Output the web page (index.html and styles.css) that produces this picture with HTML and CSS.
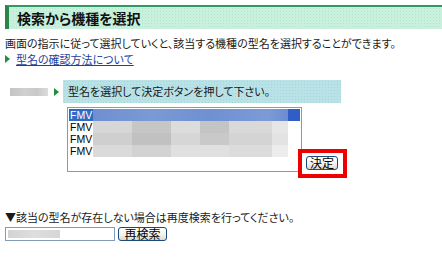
FILE: index.html
```html
<!DOCTYPE html>
<html lang="ja">
<head>
<meta charset="utf-8">
<title>検索から機種を選択</title>
<link rel="stylesheet" href="styles.css">
</head>
<body>
<div class="page">
  <h1 class="title">検索から機種を選択</h1>
  <p class="intro">画面の指示に従って選択していくと、該当する機種の型名を選択することができます。</p>
  <p class="help"><span class="tri"></span><a href="#">型名の確認方法について</a></p>

  <div class="step">
    <span class="blur-label"></span>
    <span class="tri"></span>
    <div class="step-box">型名を選択して決定ボタンを押して下さい。</div>
  </div>

  <div class="select-row">
    <div class="listbox">
      <div class="opt selected"><span class="name">FMV</span><span class="blur blur-sel"></span><span class="blur-end"></span></div>
      <div class="opt"><span class="name">FMV</span><span class="blur blur-a"></span></div>
      <div class="opt"><span class="name">FMV</span><span class="blur blur-b"></span></div>
      <div class="opt"><span class="name">FMV</span><span class="blur blur-c"></span></div>
    </div>
    <span class="mark"><button class="btn btn-decide" type="button">決定</button></span>
  </div>

  <p class="notfound">▼該当の型名が存在しない場合は再度検索を行ってください。</p>
  <div class="research">
    <span class="input"><span class="input-blur"></span></span>
    <button class="btn btn-search" type="button">再検索</button>
  </div>
</div>
</body>
</html>
```

FILE: styles.css
```css
* { box-sizing: border-box; }
html, body { margin: 0; padding: 0; background: #fff; }
body {
  font-family: "Noto Sans CJK JP", "Liberation Sans", sans-serif;
  font-size: 11px;
  color: #1a1a1a;
  font-feature-settings: "palt";
}
.page { width: 442px; height: 261px; overflow: hidden; }

.title {
  margin: 5px 0 0 5px;
  height: 24px;
  border-top: 2px solid #2f9a62;
  border-left: 4px solid #2a8548;
  background-color: #c8f0dc;
  background-image: radial-gradient(#b2e6cc 35%, transparent 40%);
  background-size: 3px 3px;
  padding-left: 8px;
  font-size: 14px;
  font-weight: bold;
  line-height: 22px;
  color: #111;
}

.intro {
  margin: 7px 0 0 5px;
  line-height: 14px;
  white-space: nowrap;
}
.help {
  margin: 2px 0 0 5px;
  line-height: 14px;
  display: flex;
  align-items: center;
  gap: 6px;
}
.help a { color: #1d3f9e; text-decoration: underline; }

.tri {
  width: 0; height: 0;
  border-top: 4px solid transparent;
  border-bottom: 4px solid transparent;
  border-left: 5px solid #1f8f3a;
  flex: none;
}

.step {
  margin: 14px 0 0 10px;
  display: flex;
  align-items: center;
}
.blur-label {
  width: 38px; height: 8px;
  background: linear-gradient(90deg, #c4c4c4, #d0d0d0 40%, #c8c8c8 70%, #dcdcdc);
  margin-right: 6px;
}
.step .tri { margin-right: 4px; }
.step-box {
  width: 278px;
  height: 23px;
  background-color: #b8e2e6;
  background-image: radial-gradient(#a6d6dc 35%, transparent 40%);
  background-size: 3px 3px;
  padding-left: 5px;
  line-height: 23px;
  white-space: nowrap;
}

.select-row {
  margin: 4px 0 0 67px;
  display: flex;
  align-items: flex-start;
}
.listbox {
  width: 235px;
  height: 65px;
  border: 1px solid #7f9db9;
  padding: 1px;
  background: #fff;
  font-family: "Liberation Sans", Arial, sans-serif;
  font-size: 10.5px;
}
.opt {
  height: 12px;
  line-height: 12px;
  display: flex;
  align-items: stretch;
}
.opt .name { width: 24px; padding-left: 1px; color: #000; flex: none; white-space: nowrap; }
.opt.selected { background: #316ac5; }
.opt.selected .name { color: #fff; }
.blur { width: 195px; }
.blur-sel { background: linear-gradient(90deg, #6f8fd0, #7a9ad4 30%, #6f90d2 60%, #7c9bd6 90%, #6c8cd0); }
.blur-end { width: 12px; background: #2f5ec7; }
.blur-a { background: linear-gradient(90deg, #d7d7d7 0 20%, #c6c6c6 20% 40%, #dcdcdc 40% 55%, #c4c4c4 55% 70%, #d9d9d9 70% 92%, #e6e6e6 92%); }
.blur-b { background: linear-gradient(90deg, #cfcfcf 0 20%, #c1c1c1 20% 40%, #d6d6d6 40% 55%, #c9c9c9 55% 70%, #d4d4d4 70% 92%, #e3e3e3 92%); }
.blur-c { background: linear-gradient(90deg, #dadada 0 20%, #d2d2d2 20% 40%, #e0e0e0 40% 70%, #dcdcdc 70% 92%, #ececec 92%); }

.mark {
  position: relative;
  z-index: 1;
  margin: 42px 0 0 -4px;
  border: 4px solid #ee0000;
  padding: 3px 5px 4px 4px;
  display: flex;
  background: #fff;
}

.btn {
  font-family: "Noto Sans CJK JP", sans-serif;
  font-size: 12px;
  height: 14px;
  line-height: 12px;
  padding: 0;
  border: 1px solid #1c4a7a;
  border-radius: 3px;
  background: linear-gradient(#ffffff, #f2f1ea 60%, #dcd9cc);
  color: #000;
}
.btn-decide { width: 32px; }
.btn-search { width: 49px; }

.notfound {
  margin: 33px 0 0 5px;
  line-height: 13px;
  white-space: nowrap;
}
.research {
  margin: 3px 0 0 5px;
  display: flex;
  gap: 3px;
}
.input {
  width: 110px;
  height: 14px;
  border: 1px solid #7f9db9;
  padding: 2px;
  display: flex;
  background: #fff;
}
.input-blur { width: 52px; background: linear-gradient(90deg, #d3d3d3, #dedede 50%, #d6d6d6); }
```
